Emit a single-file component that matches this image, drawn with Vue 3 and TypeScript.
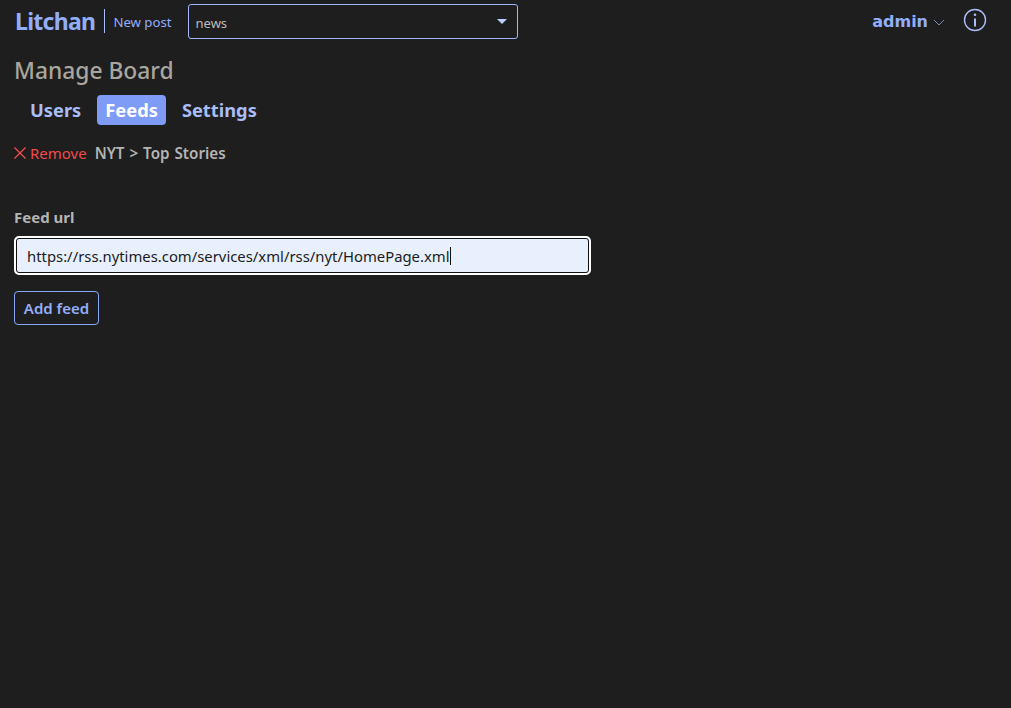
<template>
  <div class="page">
    <nav class="navbar">
      <a class="brand">Litchan</a>
      <a class="new-post">New post</a>
      <div class="board-select">
        <span>{{ board }}</span>
        <i class="caret"></i>
      </div>
      <div class="nav-right">
        <a class="user">
          {{ user }}
          <svg class="chevron" viewBox="0 0 12 7" width="12" height="7" fill="none" stroke="currentColor" stroke-width="1">
            <path d="M1 1l5 5 5-5" />
          </svg>
        </a>
        <svg class="info" viewBox="0 0 24 24" width="24" height="24" fill="none" stroke="currentColor">
          <circle cx="12" cy="12" r="10.5" stroke-width="1.4" />
          <circle cx="12" cy="6.8" r="1.3" fill="currentColor" stroke="none" />
          <path d="M12 10.5v8" stroke-width="2" />
        </svg>
      </div>
    </nav>

    <main class="content">
      <h5 class="title">Manage Board</h5>
      <ul class="tabs">
        <li v-for="tab in tabs" :key="tab" class="tab" :class="{ active: tab === activeTab }">{{ tab }}</li>
      </ul>

      <div class="feed-row">
        <a class="remove">
          <svg viewBox="0 0 12 12" width="12" height="12" fill="none" stroke="currentColor" stroke-width="1.3">
            <path d="M0.4 0.4l11.2 11.2M11.6 0.4L0.4 11.6" />
          </svg>
          Remove
        </a>
        <span class="feed-name">NYT &gt; Top Stories</span>
      </div>

      <form class="feed-form" @submit.prevent>
        <label class="label" for="feed-url">Feed url</label>
        <div class="input">
          <span id="feed-url">{{ feedUrl }}</span><i class="cursor"></i>
        </div>
        <button class="add-btn" type="submit">Add feed</button>
      </form>
    </main>
  </div>
</template>

<script setup lang="ts">
const board = 'news';
const user = 'admin';
const tabs = ['Users', 'Feeds', 'Settings'];
const activeTab = 'Feeds';
const feedUrl = 'https://rss.nytimes.com/services/xml/rss/nyt/HomePage.xml';
</script>

<style>
html, body {
  background: #1e1e1e;
}
</style>

<style scoped>
.page {
  min-height: 708px;
  background: #1e1e1e;
  font-family: "Noto Sans", "Open Sans", sans-serif;
  color: #bbb;
}

.navbar {
  display: flex;
  align-items: center;
  height: 43px;
  padding: 0 24px 0 15px;
  box-sizing: border-box;
}

.brand {
  margin-bottom: 1px;
  padding-right: 9px;
  border-right: 1px solid #a9bdf8;
  font-size: 23px;
  font-weight: 700;
  line-height: 24px;
  letter-spacing: -0.7px;
  color: #92aefb;
}

.new-post {
  margin-left: 8px;
  font-size: 13.2px;
  color: #92aefb;
}

.board-select {
  display: flex;
  align-items: center;
  justify-content: space-between;
  box-sizing: border-box;
  width: 330px;
  height: 35px;
  margin-left: 16px;
  padding: 2px 10px 0 7px;
  border: 1px solid #a2b8fa;
  border-radius: 3px;
  font-size: 13px;
  color: #bbb;
}

.caret {
  width: 0;
  height: 0;
  margin-top: -3px;
  border-left: 5px solid transparent;
  border-right: 5px solid transparent;
  border-top: 5px solid #bcd0fa;
}

.nav-right {
  display: flex;
  align-items: center;
  margin-left: auto;
  gap: 18px;
  color: #92aefb;
}

.user {
  display: flex;
  align-items: center;
  gap: 5px;
  font-family: "DejaVu Sans", sans-serif;
  font-size: 16px;
  font-weight: 800;
}

.chevron {
  margin-top: 2px;
  color: #7c8db8;
}

.info {
  margin-bottom: 3px;
  color: #a9bdf8;
}

.content {
  padding: 0 14px;
}

.title {
  margin: 13px 0 0;
  font-size: 22.8px;
  font-weight: 500;
  line-height: 30px;
  color: #aaa69e;
}

.tabs {
  display: flex;
  margin: 9px 0 0;
  padding: 0;
  list-style: none;
}

.tab {
  margin-left: 8px;
  padding: 0 8px;
  font-size: 18.3px;
  font-weight: 700;
  line-height: 30px;
  border-radius: 4px;
  color: #a9bdf8;
}

.tab.active {
  background: #7e9bf6;
  color: #fff;
}

.feed-row {
  display: flex;
  align-items: center;
  gap: 8px;
  margin-top: 16px;
  font-size: 15px;
  line-height: 24px;
}

.remove {
  display: flex;
  align-items: center;
  gap: 4px;
  color: #f24b4b;
}

.feed-name {
  font-size: 15.2px;
  font-weight: 600;
  word-spacing: 1px;
  color: #b4b4b4;
}

.feed-form {
  display: flex;
  flex-direction: column;
  align-items: flex-start;
  margin-top: 41px;
}

.label {
  font-size: 15px;
  font-weight: 700;
  line-height: 22px;
  color: #b4b4b4;
}

.input {
  display: flex;
  align-items: center;
  box-sizing: border-box;
  width: 577px;
  height: 39px;
  margin-top: 8px;
  padding: 0 11px;
  background: #e8f0fe;
  border: 2px solid #fff;
  border-radius: 5px;
  outline: 1px solid #111;
  outline-offset: -3px;
  font-size: 14.85px;
  color: #1c1c1c;
  white-space: nowrap;
}

.cursor {
  width: 1px;
  height: 18px;
  background: #111;
}

.add-btn {
  width: 85px;
  height: 34px;
  margin-top: 16px;
  padding: 0;
  background: transparent;
  border: 1px solid #8ba8f8;
  border-radius: 4px;
  font-family: inherit;
  font-size: 15px;
  font-weight: 600;
  color: #92aefb;
}
</style>
